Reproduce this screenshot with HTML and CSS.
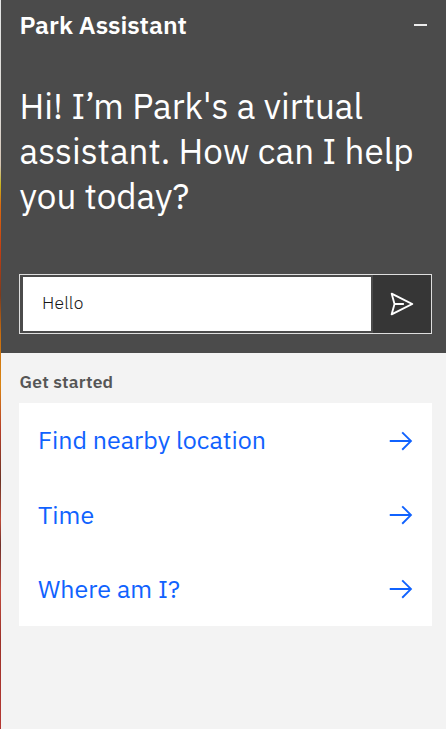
FILE: index.html
```
<!DOCTYPE html>
<html lang="en">
<head>
<meta charset="utf-8">
<title>Park Assistant</title>
<link rel="stylesheet" href="styles.css">
</head>
<body>
<div class="backdrop"></div>
<main class="chat">
  <header class="home">
    <div class="bar">
      <h1 class="title">Park Assistant</h1>
      <svg class="minimize" viewBox="0 0 14 4" aria-label="Minimize"><path d="M0 2H13" stroke="currentColor" stroke-width="1.8"/></svg>
    </div>
    <p class="greeting">Hi! I’m Park's a virtual assistant. How can I help you today?</p>
    <div class="composer">
      <div class="field"><span class="typed">Hello</span></div>
      <div class="send"><svg viewBox="0 0 32 32" aria-label="Send"><path fill="currentColor" d="M27.45 15.11l-22-11a1 1 0 0 0-1.08.12 1 1 0 0 0-.33 1L7 16 4 26.74A1 1 0 0 0 5 28a1 1 0 0 0 .45-.11l22-11a1 1 0 0 0 0-1.78Zm-20.9 10L8.76 17H18V15H8.76L6.55 6.89 24.76 16Z"/></svg></div>
    </div>
  </header>
  <section class="starters">
    <h2 class="label">Get started</h2>
    <div class="list">
      <div class="row"><span class="text">Find nearby location</span><svg class="arrow" viewBox="0 0 32 32"><path fill="currentColor" d="M18 6l-1.43 1.393L24.15 15H4v2h20.15l-7.58 7.573L18 26l10-10z"/></svg></div>
      <div class="row"><span class="text">Time</span><svg class="arrow" viewBox="0 0 32 32"><path fill="currentColor" d="M18 6l-1.43 1.393L24.15 15H4v2h20.15l-7.58 7.573L18 26l10-10z"/></svg></div>
      <div class="row"><span class="text">Where am I?</span><svg class="arrow" viewBox="0 0 32 32"><path fill="currentColor" d="M18 6l-1.43 1.393L24.15 15H4v2h20.15l-7.58 7.573L18 26l10-10z"/></svg></div>
    </div>
  </section>
</main>
</body>
</html>
```
FILE: styles.css
```
* { box-sizing: border-box; }
body {
  margin: 0;
  width: 446px;
  height: 729px;
  display: flex;
  overflow: hidden;
  font-family: "IBM Plex Sans", "Noto Sans", sans-serif;
}
h1, h2, p { margin: 0; }
svg { display: block; flex: none; }
.backdrop {
  width: 1px;
  background: linear-gradient(#e4e6e6 0, #ddd9d4 120px, #d5c5b5 165px, #c9b61c 185px, #dc6a10 205px, #c23d12 250px, #7d3a1c 295px, #c96f10 335px, #d98412 385px, #b53d28 430px, #6b3324 480px, #bd4a38 520px, #70302a 545px, #c04a3c 590px, #9c3028 640px, #b53832 729px);
}
.chat { flex: 1; background: #f3f3f3; }
.home {
  height: 353px;
  padding: 0 14px 0 18px;
  background: #4b4b4b;
  color: #fff;
}
.bar {
  height: 49px;
  display: flex;
  justify-content: space-between;
  align-items: center;
  padding-right: 4px;
}
.title { font-size: 25px; font-weight: 600; line-height: 34px; padding-left: 0.4px; }
.minimize { width: 14px; height: 4px; }
.greeting {
  margin-top: 35px;
  height: 190px;
  font-size: 35px;
  line-height: 45px;
  padding-left: 0.5px;
}
.composer {
  height: 60px;
  border: 1px solid #dedede;
  display: flex;
  justify-content: space-between;
}
.field {
  width: 348px;
  margin: 2px 0 2px 3px;
  padding: 0 0 3px 19px;
  display: flex;
  align-items: center;
  background: #fff;
  color: #161616;
  font-size: 17.5px;
  font-weight: 300;
  letter-spacing: 0.2px;
}
.send {
  width: 58px;
  display: flex;
  align-items: center;
  justify-content: center;
  background: #363636;
}
.send svg, .arrow { width: 30px; height: 30px; }
.starters { padding: 17px 14px 0 18px; }
.label { font-size: 17.5px; font-weight: 600; line-height: 24px; letter-spacing: 0.2px; color: #565656; padding-left: 0.6px; }
.list { margin-top: 9px; height: 223px; display: grid; grid-template-rows: 75px 74px 74px; background: #fff; }
.row {
  display: flex;
  align-items: center;
  justify-content: space-between;
  padding: 0 16.4px 0 19px;
  color: #1062fe;
  font-size: 25px;
  white-space: nowrap;
}
.text { padding-bottom: 2px; }
```
